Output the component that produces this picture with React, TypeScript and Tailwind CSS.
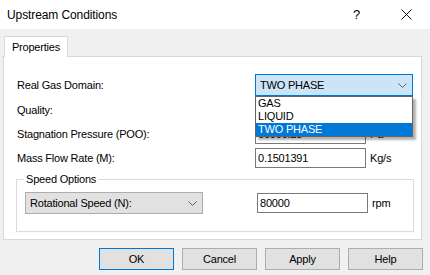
import { useState } from 'react';

const ui = { fontFamily: '"Liberation Sans", Arial, sans-serif' };

function Chevron() {
  return (
    <svg width="9" height="5" viewBox="0 0 9 5" className="shrink-0">
      <path d="M0.5 0.5 L4.5 4.5 L8.5 0.5" fill="none" stroke="#5f5f5f" strokeWidth="1" />
    </svg>
  );
}

function Field({ value, unit }: { value: string; unit: string }) {
  return (
    <div className="flex items-center">
      <div className="w-[111px] h-[20px] border border-[#7a7a7a] bg-white pl-[2px] flex items-center text-[11px] text-black">
        {value}
      </div>
      <span className="ml-[4px] text-[11px] text-black">{unit}</span>
    </div>
  );
}

export default function App() {
  const [domain] = useState('TWO PHASE');
  const options = ['GAS', 'LIQUID', 'TWO PHASE'];

  return (
    <div className="w-[430px] h-[275px] bg-[#f0f0f0] overflow-hidden tracking-[-0.2px]" style={ui}>
      {/* title bar */}
      <div className="h-[29px] bg-white flex items-center pl-[7px]">
        <span className="text-[12px] text-black tracking-[-0.1px]">Upstream Conditions</span>
        <span className="ml-auto mr-[41px] text-[13px] text-black">?</span>
        <svg width="11" height="11" viewBox="0 0 11 11" className="mr-[18px]">
          <path d="M0.5 0.5 L10.5 10.5 M10.5 0.5 L0.5 10.5" stroke="#111" strokeWidth="1" />
        </svg>
      </div>

      <div className="px-[3px] pt-[7px]">
        {/* tab */}
        <div className="ml-[1px] w-[64px] h-[21px] bg-white border border-b-0 border-[#d9d9d9] flex items-center justify-center text-[11px] text-black relative z-10 -mb-[1px]">
          Properties
        </div>

        {/* panel */}
        <div className="relative w-[419px] h-[184px] bg-white border border-[#d9d9d9] pt-[17px]">
          <div className="pl-[13px] flex flex-col gap-[3px]">
            <div className="flex items-center h-[22px]">
              <span className="w-[238px] text-[11px] text-black">Real Gas Domain:</span>
              <div className="w-[158px] h-[22px] border border-[#0078d7] bg-[#cce4f7] flex items-center pl-[4px] pr-[5px] text-[11px] text-black">
                <span>{domain}</span>
                <span className="ml-auto"><Chevron /></span>
              </div>
            </div>
            <div className="flex flex-col gap-[4px] pt-[1px]">
              <div className="flex items-center">
                <span className="w-[238px] text-[11px] text-black">Quality:</span>
                <Field value="" unit="" />
              </div>
              <div className="flex items-center">
                <span className="w-[238px] text-[11px] text-black">Stagnation Pressure (POO):</span>
                <Field value="60000.25" unit="Pa" />
              </div>
              <div className="flex items-center">
                <span className="w-[238px] text-[11px] text-black">Mass Flow Rate (M):</span>
                <Field value="0.1501391" unit="Kg/s" />
              </div>
            </div>
          </div>

          {/* speed options group */}
          <fieldset className="ml-[12px] mt-[5px] w-[398px] h-[59px] border border-[#dcdcdc] rounded-none px-0 pt-[6px] pb-0">
            <legend className="ml-[7px] px-[2px] text-[11px] text-black leading-[13px]">Speed Options</legend>
            <div className="flex items-center pl-[8px]">
              <div className="w-[178px] h-[22px] border border-[#adadad] bg-[#e1e1e1] flex items-center pl-[4px] pr-[5px] text-[11px] text-black">
                <span>Rotational Speed (N):</span>
                <span className="ml-auto"><Chevron /></span>
              </div>
              <div className="ml-[54px]">
                <Field value="80000" unit="rpm" />
              </div>
            </div>
          </fieldset>

          {/* open dropdown list */}
          <div className="absolute left-[251px] top-[39px] w-[158px] border border-[#646464] bg-white shadow-[3px_3px_2px_rgba(0,0,0,0.3)] text-[11px] text-black">
            {options.map((o) => (
              <div
                key={o}
                className={
                  o === domain
                    ? 'h-[13px] leading-[13px] pl-[2px] bg-[#0078d7] text-white'
                    : 'h-[13px] leading-[13px] pl-[2px]'
                }
              >
                {o}
              </div>
            ))}
          </div>
        </div>

        {/* buttons */}
        <div className="flex justify-end gap-[8px] mt-[8px] pr-[4px]">
          <button className="w-[75px] h-[22px] border border-[#0078d7] bg-[#e1e1e1] text-[11px] text-black">OK</button>
          <button className="w-[75px] h-[22px] border border-[#adadad] bg-[#e1e1e1] text-[11px] text-black">Cancel</button>
          <button className="w-[75px] h-[22px] border border-[#adadad] bg-[#e1e1e1] text-[11px] text-black">Apply</button>
          <button className="w-[75px] h-[22px] border border-[#adadad] bg-[#e1e1e1] text-[11px] text-black">Help</button>
        </div>
      </div>
    </div>
  );
}
